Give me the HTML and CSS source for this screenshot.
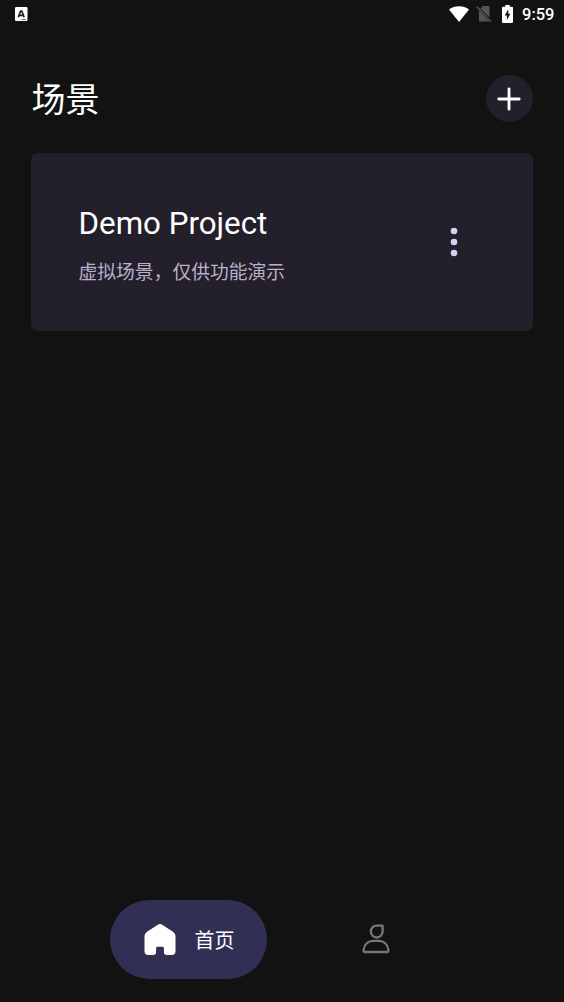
FILE: index.html
```html
<!DOCTYPE html>
<html lang="zh-CN">
<head>
<meta charset="utf-8">
<meta name="viewport" content="width=device-width, initial-scale=1">
<title>场景</title>
<link rel="stylesheet" href="styles.css">
</head>
<body>
<div class="app">
  <div class="status">
    <svg class="status-app" width="13" height="14" viewBox="0 0 13 14"><rect width="12.500" height="14" rx="1.200" fill="#fff"/><path d="M3.300 10.200 5.600 4H6.800L9.100 10.200M4.400 8.300h3.600" fill="none" stroke="#222" stroke-width="1.700"/><path d="M6.500 12.500h4.500" stroke="#777" stroke-width="1"/></svg>
    <div class="status-right">
      <svg class="wifi" width="20" height="16" viewBox="0 0 20 16"><path d="M10 16 0 3.500C5.600-.9 14.400-.9 20 3.500Z" fill="#fff"/></svg>
      <svg class="sim" width="16" height="18" viewBox="0 0 16 18"><path d="M7 1h5.500q1 0 1 1v10.500L4.500 3.500ZM3 5.700 13.200 16.500H4q-1 0-1-1Z" fill="#555"/><path d="M.8 1.800 15 16.800" stroke="#555" stroke-width="1.500"/></svg>
      <svg class="battery" width="11" height="18" viewBox="0 0 11 18"><path d="M3.300 0h4.400v1.800H10q1 0 1 1V17q0 1-1 1H1q-1 0-1-1V2.800q0-1 1-1h2.300Z" fill="#fff"/><path d="M6.300 4.200 2.700 10.400h2.200v4.600l3.600-6.300H6.300Z" fill="#151515"/></svg>
      <span class="time">9:59</span>
    </div>
  </div>
  <header class="header">
    <h1 class="title">场景</h1>
    <button class="add" aria-label="添加"><svg width="24" height="24" viewBox="0 0 24 24"><path d="M12 1.800v20.400M1.800 12h20.400" stroke="#fff" stroke-width="2.800" stroke-linecap="round"/></svg></button>
  </header>
  <main class="main">
    <section class="card">
      <div class="card-text">
        <h2 class="card-title">Demo Project</h2>
        <p class="card-sub">虚拟场景，仅供功能演示</p>
      </div>
      <button class="more" aria-label="更多"><svg width="8" height="30" viewBox="0 0 8 30"><g fill="#d8cff5"><circle cx="4" cy="4" r="3.300"/><circle cx="4" cy="15" r="3.300"/><circle cx="4" cy="26" r="3.300"/></g></svg></button>
    </section>
  </main>
  <nav class="nav">
    <a class="tab-active">
      <svg class="home" width="32" height="33" viewBox="0 0 32 33"><path d="M13.400 1.900Q16 .1 18.600 1.900L29 8.700Q31.500 10.500 31.500 13V28.300Q31.500 32 27.800 32H22.300Q19.900 32 19.900 29.600V25Q19.900 23.700 18.600 23.700H13.400Q12.100 23.700 12.100 25V29.600Q12.100 32 9.700 32H4.200Q.5 32 .5 28.300V13Q.5 10.500 3 8.700Z" fill="#fff"/></svg>
      <span>首页</span>
    </a>
    <a class="tab"><svg width="28" height="30" viewBox="0 0 28 30" fill="none" stroke="#777" stroke-width="2.300" stroke-linejoin="round"><path d="M20.600 1.700V7.600A5.900 5.900 0 1 1 14.700 1.700Z"/><path d="M3.300 28H24.700Q26.700 28 26.400 25.800C25.600 20.200 21.600 16.800 16.700 16.800H11.300C6.400 16.800 2.400 20.200 1.600 25.800Q1.300 28 3.300 28Z"/></svg></a>
  </nav>
</div>
</body>
</html>
```
FILE: styles.css
```css
* { box-sizing: border-box; }
body {
  margin: 0;
  background: #121212;
  color: #fff;
  font-family: Roboto, "Noto Sans CJK SC", sans-serif;
}
h1, h2, p { margin: 0; font-weight: 400; }
svg { display: block; flex: none; }
button { border: 0; padding: 0; background: none; }
.app { height: 1002px; display: flex; flex-direction: column; overflow: hidden; }
.status {
  height: 28px;
  padding: 0 9.5px 0 15px;
  display: flex;
  align-items: center;
  justify-content: space-between;
}
.status-right { display: flex; align-items: center; }
.sim { margin-left: 7px; }
.battery { margin-left: 10px; }
.time { margin-left: 9px; font-size: 16.5px; font-weight: 500; line-height: 28px; padding-top: 1px; }
.header {
  height: 125px;
  padding: 47px 31.5px 0;
  display: flex;
  align-items: flex-start;
  justify-content: space-between;
}
.title { padding-top: 2px; font-size: 34px; line-height: 47px; }
.add {
  width: 47px;
  height: 47px;
  border-radius: 50%;
  background: #231f2b;
  display: flex;
  align-items: center;
  justify-content: center;
}
.main { flex: 1; padding: 0 31px; }
.card {
  height: 178px;
  padding: 0 75px 0 47.5px;
  border-radius: 7px;
  background: #231f2b;
  display: flex;
  align-items: center;
  justify-content: space-between;
}
.card-text { padding-top: 6px; }
.card-title { font-size: 31.3px; line-height: 40px; }
.card-sub { margin-top: 15px; font-size: 18.8px; line-height: 28px; color: #b9b1ca; }
.nav {
  height: 102px;
  padding-left: 109.5px;
  display: flex;
  align-items: flex-start;
}
.tab-active {
  width: 157px;
  height: 78.5px;
  border-radius: 40px;
  background: #322f55;
  padding-left: 34px;
  display: flex;
  align-items: center;
  gap: 19px;
  font-size: 20px;
}
.tab { height: 78px; display: flex; align-items: center; margin-left: 95.5px; }
```
